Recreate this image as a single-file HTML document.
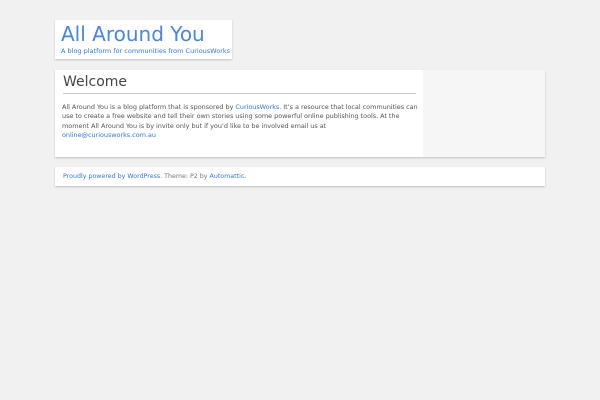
<!DOCTYPE html>
<html><head><style>
body{margin:0;background:#f1f1f1;font-family:"DejaVu Sans","Liberation Sans",sans-serif;width:600px;height:400px;position:relative;overflow:hidden}
a{color:#3478e3;text-decoration:none}
.hdr{position:absolute;left:55px;top:20px;width:177px;height:39px;background:#fff;box-shadow:0 1px 2px rgba(0,0,0,.2)}
.hdr h1{margin:0;position:absolute;left:6px;top:2px;font-weight:normal;font-size:20px;color:#4a86e0;letter-spacing:0px}
.hdr p{margin:0;position:absolute;left:6px;top:27px;font-size:6.5px;color:#3478e3}
.main{position:absolute;left:55px;top:70px;width:490px;height:87px;background:#f6f6f6;box-shadow:0 1px 2px rgba(0,0,0,.2)}
.content{position:absolute;left:0;top:0;width:368px;height:87px;background:#fff}
.content h2{margin:0;position:absolute;left:8px;top:4px;width:353px;font-weight:normal;font-size:14px;color:#444;border-bottom:1px solid #ccc;padding-bottom:3px}
.content p{margin:0;position:absolute;left:7px;top:33px;width:362px;font-size:6.5px;line-height:9.3px;color:#555;letter-spacing:-0.05px}
.foot{position:absolute;left:55px;top:167px;width:490px;height:19px;background:#fff;box-shadow:0 1px 2px rgba(0,0,0,.2);font-size:6.3px;color:#777}
.foot span{position:absolute;left:8px;top:6px}
</style></head><body>
<div class="hdr"><h1>All Around You</h1><p>A blog platform for communities from CuriousWorks</p></div>
<div class="main"><div class="content"><h2>Welcome</h2>
<p>All Around You is a blog platform that is sponsored by <a>CuriousWorks</a>. It’s a resource that local communities can use to create a free website and tell their own stories using some powerful online publishing tools. At the moment All Around You is by invite only but if you’d like to be involved email us at<br><a>online@curiousworks.com.au</a></p></div></div>
<div class="foot"><span><a>Proudly powered by WordPress</a>. Theme: P2 by <a>Automattic</a>.</span></div>
</body></html>
